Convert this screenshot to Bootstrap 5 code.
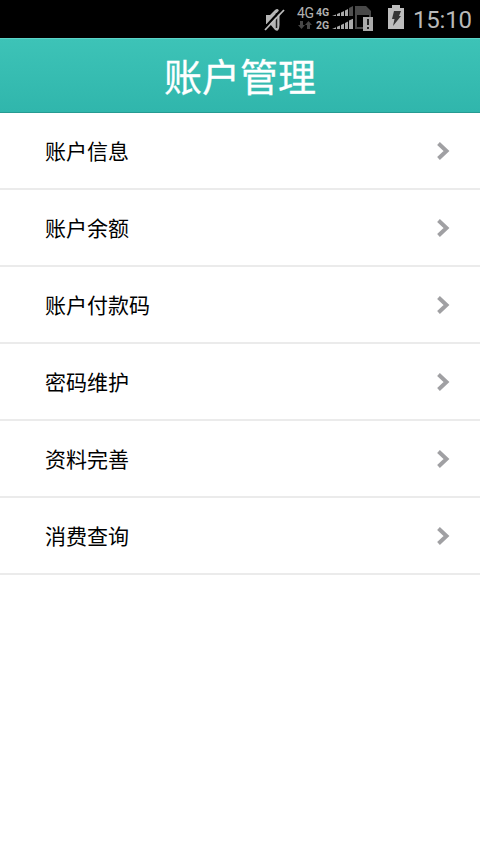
<!DOCTYPE html>
<html lang="zh-CN">
<head>
<meta charset="utf-8">
<meta name="viewport" content="width=device-width, initial-scale=1">
<title>账户管理</title>
<link href="https://cdn.jsdelivr.net/npm/bootstrap@5.3.0/dist/css/bootstrap.min.css" rel="stylesheet">
<style>
body { font-family: "Noto Sans CJK SC", sans-serif; background: #fff; min-height: 854px; }
.status-bar { height: 38px; background: #000; color: #b9b9b9; font-family: Roboto, sans-serif; padding-right: 9px; }
.status-bar svg { display: block; flex: none; }
.net-main { width: 18px; margin-left: 12px; padding-top: 7px; font-size: 14px; line-height: 13px; letter-spacing: -.3px; color: #b0b0b0; }
.net-sub { width: 16px; margin-left: 1px; padding-top: 6px; font-size: 10.5px; line-height: 13px; font-weight: 700; color: #b0b0b0; }
.battery { margin-left: 14px; }
.clock { width: 58px; margin-left: 9px; font-size: 24px; line-height: 40px; letter-spacing: -.2px; }
.title-bar { height: 75px; background: linear-gradient(#3dc3b7, #30b6ac); border-top: 1px solid #5bd3c8; border-bottom: 1px solid #279b92; }
.title-bar h1 { font-size: 38px; line-height: 71px; font-weight: 400; color: #fff; -webkit-text-stroke: .3px #fff; }
.menu-list .list-group-item, .menu-list .list-group-item:last-child { height: 77px; padding: 0 30px 0 45px; border-width: 0 0 2px; border-color: #ebebeb; font-size: 21px; line-height: 75px; color: #000; }
</style>
</head>
<body>
<header>
  <div class="status-bar d-flex justify-content-end">
    <svg width="21" height="38" viewBox="0 0 21 38"><path d="M2 15h4l5-5q4-3 4.500 4v11q-.5 8-4.500 5l-5-6H2z" fill="#b5b5b5"/><path d="M12.500 13v15" stroke="#222" stroke-width="1.500"/><path d="M0 28.500 18.500 8.500" stroke="#000" stroke-width="2.500"/><path d="M1 30 20 10" stroke="#bdbdbd" stroke-width="1.800"/></svg>
    <div class="net-main">4G
      <svg width="16" height="10" viewBox="0 0 16 10"><path d="M3 1h3v4h2L4.500 9 1 5h2zM10 9h3V5h2l-3.500-4L8 5h2z" fill="#484848"/></svg>
    </div>
    <div class="net-sub">4G<br>2G</div>
    <svg width="22" height="38" viewBox="0 0 22 38"><path d="M0 16l4-1.500V16zM5 16v-2l3-1.200V16zM9 16v-3.600l3-1.400v5zM13 16v-5.500L16 9v7zM0 29l4-1.800V29zM5 29v-2.200l3-1.300V29zM9 29v-4l3-1.500V29zM13 29v-6l3-1.500V29zM17 29v-8.500l4-1.800V29z" fill="#aaa"/><path d="M17 16V8l4-2v10z" fill="#505050"/></svg>
    <svg width="20" height="38" viewBox="0 0 20 38"><path d="M1 6h11l5 5v4H1z" fill="#484848"/><path d="M2 14v14h7M16 13v6" fill="none" stroke="#484848" stroke-width="2"/><path d="M9 17h10v14H9z" fill="#aaa"/><path d="M13 19h2v6h-2zM13 27h2v2h-2z" fill="#222"/></svg>
    <svg class="battery" width="16" height="38" viewBox="0 0 16 38"><path d="M0 8h4V5h8v3h4v21H0z" fill="#bdbdbd"/><path d="M6 11h7l-2 5h2L5 26l1.500-7H4z" fill="#353535"/></svg>
    <div class="clock">15:10</div>
  </div>
  <div class="title-bar text-center"><h1 class="m-0">账户管理</h1></div>
</header>
<main class="list-group list-group-flush rounded-0 menu-list">
  <a href="#" class="list-group-item list-group-item-action d-flex justify-content-between align-items-center">账户信息<svg width="14" height="20" viewBox="0 0 14 20"><path d="m2.500 2.500 8 7.500-8 7.500" fill="none" stroke="#a0a0a3" stroke-width="4"/></svg></a>
  <a href="#" class="list-group-item list-group-item-action d-flex justify-content-between align-items-center">账户余额<svg width="14" height="20" viewBox="0 0 14 20"><path d="m2.500 2.500 8 7.500-8 7.500" fill="none" stroke="#a0a0a3" stroke-width="4"/></svg></a>
  <a href="#" class="list-group-item list-group-item-action d-flex justify-content-between align-items-center">账户付款码<svg width="14" height="20" viewBox="0 0 14 20"><path d="m2.500 2.500 8 7.500-8 7.500" fill="none" stroke="#a0a0a3" stroke-width="4"/></svg></a>
  <a href="#" class="list-group-item list-group-item-action d-flex justify-content-between align-items-center">密码维护<svg width="14" height="20" viewBox="0 0 14 20"><path d="m2.500 2.500 8 7.500-8 7.500" fill="none" stroke="#a0a0a3" stroke-width="4"/></svg></a>
  <a href="#" class="list-group-item list-group-item-action d-flex justify-content-between align-items-center">资料完善<svg width="14" height="20" viewBox="0 0 14 20"><path d="m2.500 2.500 8 7.500-8 7.500" fill="none" stroke="#a0a0a3" stroke-width="4"/></svg></a>
  <a href="#" class="list-group-item list-group-item-action d-flex justify-content-between align-items-center">消费查询<svg width="14" height="20" viewBox="0 0 14 20"><path d="m2.500 2.500 8 7.500-8 7.500" fill="none" stroke="#a0a0a3" stroke-width="4"/></svg></a>
</main>
<script src="https://cdn.jsdelivr.net/npm/bootstrap@5.3.0/dist/js/bootstrap.bundle.min.js"></script>
</body>
</html>
